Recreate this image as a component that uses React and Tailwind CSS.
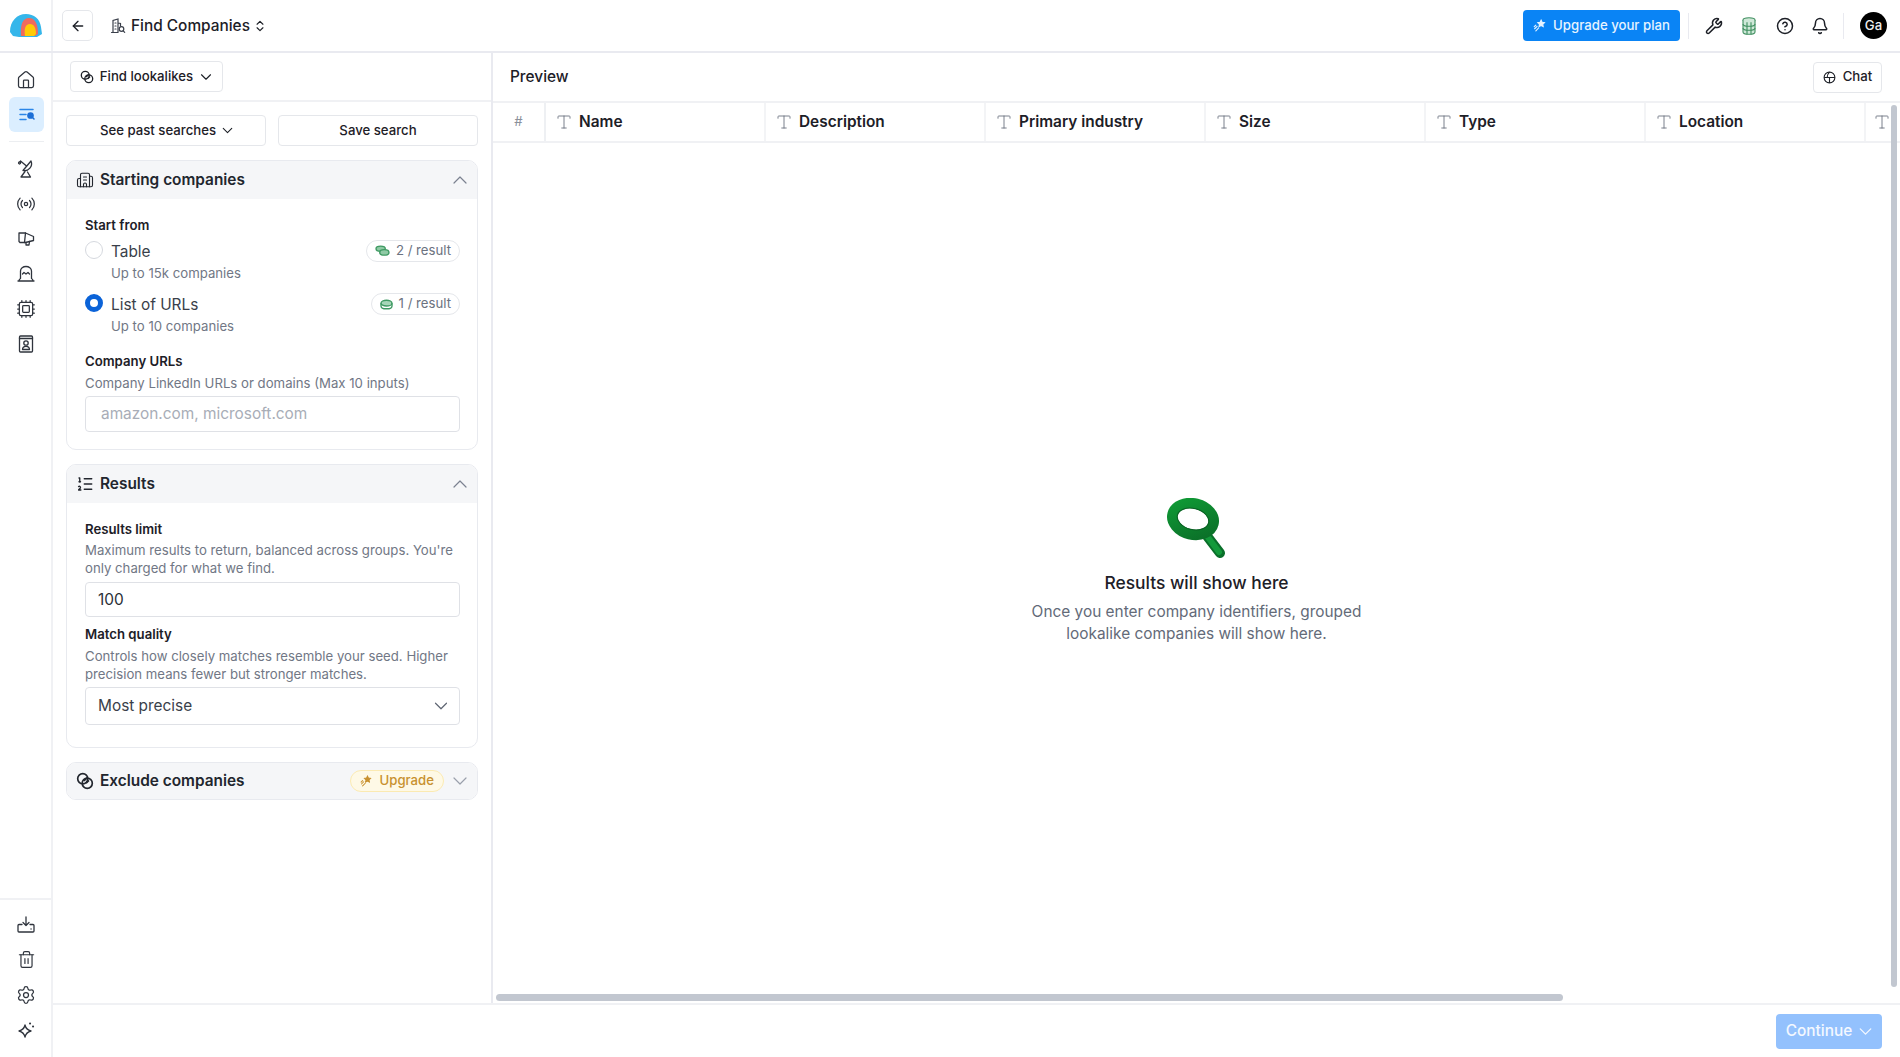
import React from "react";
import {
  ArrowLeft,
  Bell,
  Building2,
  ChevronDown,
  ChevronUp,
  ChevronsUpDown,
  CircleHelp,
  Cpu,
  House,
  ListOrdered,
  Radio,
  Settings,
  Trash2,
  Type,
  Wrench,
} from "lucide-react";

const Logo = () => (
  <svg width="32" height="24" viewBox="0 0 32 24">
    <path d="M0 18C0 7 7 0 16 0c8 0 14 5 15 13l1 7-5 3H9l-6-1z" fill="#35b6ea" />
    <path d="M11 22C10 10 13 4 19 4c6 0 9 6 9 16l-3 2z" fill="#ef6a5e" />
    <path d="M15 22c-1-7 0-12 5-12 4 0 6 4 6 10l-2 2z" fill="#ffcb05" />
  </svg>
);

const TitleIcon = () => (
  <svg width="16" height="16" viewBox="0 0 16 16" fill="none" stroke="#3a3f4a" strokeWidth="1.200" strokeLinecap="round">
    <path d="M3 14.500V2.500l5-1.500v13.500M8 5l2.500.5V8M1.500 14.500H8" />
    <path d="M5 5h1M5 8h1M5 11h1" />
    <circle cx="11.500" cy="11" r="2.300" />
    <path d="M13.200 12.800l1.500 1.500" />
  </svg>
);

const LookalikeIcon = ({ size = 14 }) => (
  <svg width={size} height={size} viewBox="0 0 16 16" fill="none" stroke="currentColor" strokeWidth="1.500">
    <circle cx="6" cy="6" r="4.500" />
    <circle cx="10" cy="10" r="4.500" />
    <path d="M7 8l3-3M9 10l2.500-2.500" />
  </svg>
);

const StarTrail = ({ size = 14 }) => (
  <svg width={size} height={size} viewBox="0 0 16 16" fill="none" stroke="currentColor" strokeWidth="1.400" strokeLinecap="round">
    <path d="M10 1.500l1.200 2.600 2.800.4-2 2 .5 2.800-2.500-1.300-2.500 1.300.5-2.800-2-2 2.800-.4z" fill="currentColor" />
    <path d="M5 9l-3 3M7 11l-3.500 3.500M3.500 7.500l-2 2" />
  </svg>
);

const CoinsStack = () => (
  <svg width="15" height="12" viewBox="0 0 16 13" fill="none" stroke="#3f9a63" strokeWidth="1.500">
    <ellipse cx="6" cy="4" rx="5" ry="2.800" fill="#8fcaa5" />
    <ellipse cx="10" cy="8" rx="5" ry="3" fill="#8fcaa5" />
  </svg>
);

const Coin = () => (
  <svg width="13" height="11" viewBox="0 0 14 12" fill="none" stroke="#3f9a63" strokeWidth="1.500">
    <ellipse cx="7" cy="4.500" rx="6" ry="3.200" fill="#a6d6b8" />
    <path d="M1 4.500v3c0 1.800 2.700 3.200 6 3.200s6-1.400 6-3.200v-3" />
  </svg>
);

const DbIcon = () => (
  <svg width="14" height="18" viewBox="0 0 14 18" fill="#cfe8d8" stroke="#3f8f5f" strokeWidth="1.100">
    <ellipse cx="7" cy="3" rx="6" ry="2.300" />
    <path d="M1 3v12c0 1.300 2.700 2.300 6 2.300s6-1 6-2.300V3" />
    <path d="M1 7c0 1.300 2.700 2.300 6 2.300s6-1 6-2.300M1 11c0 1.300 2.700 2.300 6 2.300s6-1 6-2.300M5 5.200v12M9 5.200v12" fill="none" />
  </svg>
);

const ListSearch = () => (
  <svg width="16" height="14" viewBox="0 0 16 14" fill="none" stroke="#2b86e8" strokeWidth="1.500" strokeLinecap="round">
    <path d="M1 1.500h13M1 6.500h6M1 11.500h6" />
    <circle cx="11.500" cy="7.500" r="2.600" fill="#1d6fd6" stroke="#1d6fd6" />
    <path d="M13.500 9.500l1.500 1.500" stroke="#1d6fd6" />
  </svg>
);

const ChatGlobe = () => (
  <svg width="13" height="13" viewBox="0 0 14 14" fill="none" stroke="currentColor" strokeWidth="1.200">
    <circle cx="7" cy="7" r="5.800" />
    <path d="M1.200 7h11.600M7 7v5.800M7 1.200C5 3 4.500 5 4.500 7" />
  </svg>
);

const Magnifier = () => (
  <svg width="62" height="62" viewBox="0 0 62 62" fill="none">
    <defs>
      <linearGradient id="ring" x1="0" y1="0" x2="1" y2="1">
        <stop offset="0" stopColor="#0f9a35" />
        <stop offset="1" stopColor="#0b6e28" />
      </linearGradient>
    </defs>
    <path d="M41 38l13 17" stroke="#0a6f2a" strokeWidth="10" strokeLinecap="round" />
    <path d="M41 38l12 16" stroke="#139a3b" strokeWidth="6" strokeLinecap="round" />
    <ellipse cx="27" cy="21" rx="21" ry="15.500" transform="rotate(14 27 21)" stroke="url(#ring)" strokeWidth="10.500" />
    <ellipse cx="27" cy="21" rx="16" ry="10.500" transform="rotate(14 27 21)" stroke="#0a5f23" strokeWidth="1" />
  </svg>
);

const Svg20 = ({ children }) => (
  <svg width="20" height="20" viewBox="0 0 20 20" fill="none" stroke="currentColor" strokeWidth="1.300" strokeLinecap="round" strokeLinejoin="round">
    {children}
  </svg>
);

const DishIcon = () => (
  <Svg20>
    <path d="M15 2a7 7 0 0 1-8 9.500z" />
    <path d="M4.500 2l6 5M3.500 3a1 1 0 1 0 .1 0" />
    <path d="M9 12.500L5 18h9.500l-3-5" />
  </Svg20>
);

const HornIcon = () => (
  <Svg20>
    <path d="M3 4h6.500l8 3.500v4l-8 2H4l-1-1z" />
    <path d="M9.500 4l-1 9.500M10 13.500v2.500h3l.5-3.500" />
  </Svg20>
);

const Dome = () => (
  <Svg20>
    <path d="M2 17h16M3 17c0-1 .5-2 1.500-2.500V7c0-2.500 2.500-4.500 5.500-4.500s5.500 2 5.500 4.500v7.500C16.500 15 17 16 17 17" />
    <path d="M6.500 10l1.500-1.500 2 1.500 2-1.500 1.500 1.500" />
  </Svg20>
);

const ContactIcon = () => (
  <Svg20>
    <rect x="3.500" y="2" width="13" height="16" rx="1" />
    <path d="M3.500 4.500h13" />
    <circle cx="10" cy="9" r="2.200" />
    <path d="M6.500 15.500c0-2 1.500-3.200 3.500-3.200s3.500 1.200 3.500 3.200z" />
  </Svg20>
);

const TrayIcon = () => (
  <Svg20>
    <path d="M10 2v8.500M7 7.500l3 3 3-3" />
    <path d="M6 9.500H3a1 1 0 0 0-1 1V16a1 1 0 0 0 1 1h14a1 1 0 0 0 1-1v-5.500a1 1 0 0 0-1-1h-3" />
    <path d="M15 14h.1" />
  </Svg20>
);

const SparkIcon = () => (
  <Svg20>
    <path d="M9 5c.8 3.500 2.200 5 6 6-3.800 1-5.200 2.500-6 6-.8-3.500-2.200-5-6-6 3.800-1 5.200-2.500 6-6z" />
    <path d="M14 3.500h.1M17 6.500h.1" strokeWidth="2" />
  </Svg20>
);

const LucideRail = ({ icon: Icon, size = 20 }) => <Icon size={size} strokeWidth={1.500} />;

const railTop = [
  <DishIcon />,
  <LucideRail icon={Radio} />,
  <HornIcon />,
  <Dome />,
  <LucideRail icon={Cpu} />,
  <ContactIcon />,
];
const railBottom = [
  <TrayIcon />,
  <LucideRail icon={Trash2} size={19} />,
  <LucideRail icon={Settings} />,
  <SparkIcon />,
];
const columns = ["Name", "Description", "Primary industry", "Size", "Type", "Location"];

const RailCell = ({ children }) => (
  <div className="flex h-[35px] items-center justify-center pl-[1px] text-[#2f343d]">{children}</div>
);

const Section = ({ icon, title, open = true, right, children }) => (
  <div className="overflow-hidden rounded-[10px] border border-[#e8eaef] bg-white">
    <div className={open ? "flex h-[38px] items-center bg-[#f5f6f8] pl-[9px] pr-[5px]" : "flex h-[36px] items-center bg-[#f5f6f8] pl-[9px] pr-[5px]"}>
      <span className="flex w-[18px] justify-center text-[#22262e]">{icon}</span>
      <span className="ml-[6px] text-[15.400px] font-semibold text-[#22262e]">{title}</span>
      <span className="ml-auto flex items-center gap-[4px]">
        {right}
        {open ? (
          <ChevronUp size={24} strokeWidth={1.200} className="text-[#7b8290]" />
        ) : (
          <ChevronDown size={24} strokeWidth={1.200} className="text-[#9aa0ab]" />
        )}
      </span>
    </div>
    {children}
  </div>
);

const Label = ({ children }) => (
  <div className="text-[13.200px] leading-[18px] font-semibold text-[#1d2027]">{children}</div>
);

const Hint = ({ children }) => (
  <div className="text-[13.200px] leading-[18px] text-[#717785]">{children}</div>
);

const RadioRow = ({ checked, title, hint, badge }) => (
  <div className="flex items-start">
    <span
      className={
        checked
          ? "-mt-[1px] h-[18px] w-[18px] shrink-0 rounded-full border-[5px] border-[#0b63d8] bg-white"
          : "-mt-[1px] h-[18px] w-[18px] shrink-0 rounded-full border border-[#d5d8de] bg-white"
      }
    />
    <div className="ml-[8px]">
      <div className="text-[15.400px] leading-[20px] text-[#3a3f4a]">{title}</div>
      <div className="mt-[2px] text-[13.200px] leading-[18px] text-[#717785]">{hint}</div>
    </div>
    {badge}
  </div>
);

const Badge = ({ icon, text }) => (
  <span className="ml-auto -mt-[2px] flex h-[22px] items-center gap-[6px] rounded-full border border-[#e5e7eb] px-[8px] text-[13.200px] text-[#6b7280]">
    {icon}
    {text}
  </span>
);

export default function App() {
  return (
    <div className="flex h-screen w-screen flex-col overflow-hidden bg-white font-['Inter',sans-serif] text-[#1d2027]">
      <header className="flex h-[53px] shrink-0 items-center border-b-2 border-[#e9eaf0] pr-[13px]">
        <div className="flex h-full w-[53px] shrink-0 items-center justify-center border-r-2 border-[#f0f1f4]">
          <Logo />
        </div>
        <button className="ml-[9px] flex h-[31px] w-[31px] items-center justify-center rounded-[5px] border border-[#e5e7eb]">
          <ArrowLeft size={16} strokeWidth={2} />
        </button>
        <span className="ml-[17px]">
          <TitleIcon />
        </span>
        <span className="ml-[5px] text-[15.400px] font-medium">Find Companies</span>
        <ChevronsUpDown size={14} strokeWidth={2} className="ml-[3px]" />
        <div className="ml-auto flex items-center">
          <button className="flex h-[31px] w-[157px] items-center justify-center gap-[7px] rounded-[4px] bg-[#0a84f5] text-[13.200px] font-medium text-[#e6f3ff]">
            <StarTrail size={13} />
            Upgrade your plan
          </button>
          <div className="ml-[8px] h-[26px] w-px bg-[#e9eaf0]" />
          <div className="ml-[16px] flex w-[18px] justify-center">
            <Wrench size={18} strokeWidth={2} />
          </div>
          <div className="ml-[17px] flex w-[18px] justify-center">
            <DbIcon />
          </div>
          <div className="ml-[18px] flex w-[18px] justify-center">
            <CircleHelp size={18} strokeWidth={2} />
          </div>
          <div className="ml-[17px] flex w-[18px] justify-center">
            <Bell size={18} strokeWidth={2} />
          </div>
          <div className="ml-[14px] h-[26px] w-px bg-[#e9eaf0]" />
          <div className="ml-[16px] flex h-[27px] w-[27px] items-center justify-center rounded-full bg-black text-[13.200px] font-medium text-[#eeeeee]">
            Ga
          </div>
        </div>
      </header>

      <div className="flex min-h-0 flex-1">
        <aside className="flex w-[53px] shrink-0 flex-col border-r-2 border-[#f0f1f4]">
          <div className="flex-1 pt-[9px]">
            <RailCell>
              <LucideRail icon={House} />
            </RailCell>
            <div className="ml-[9px] mr-[7px] flex h-[35px] items-center justify-center rounded-[6px] bg-[#dbeeff]">
              <ListSearch />
            </div>
            <div className="ml-[9px] mr-[7px] my-[9px] h-px bg-[#eceef1]" />
            {railTop.map((icon, i) => (
              <RailCell key={i}>{icon}</RailCell>
            ))}
          </div>
          <div className="h-[159px] border-t-2 border-[#f0f1f4] pt-[7px]">
            {railBottom.map((icon, i) => (
              <RailCell key={i}>{icon}</RailCell>
            ))}
          </div>
        </aside>

        <div className="flex min-w-0 flex-1 flex-col">
          <div className="flex min-h-0 flex-1">
            <section className="w-[440px] shrink-0 border-r-2 border-[#e9eaf0]">
              <div className="flex h-[49px] items-center border-b-2 border-[#f0f1f4] pl-[17px]">
                <button className="flex h-[31px] w-[153px] items-center justify-center gap-[6px] rounded-[4px] border border-[#e5e7eb] pl-[2px] text-[13.200px] font-medium">
                  <LookalikeIcon size={14} />
                  Find lookalikes
                  <ChevronDown size={18} strokeWidth={1.500} className="-ml-[2px]" />
                </button>
              </div>

              <div className="flex flex-col gap-[14px] px-[13px] pt-[13px]">
                <div className="grid grid-cols-2 gap-[12px]">
                  <button className="flex h-[31px] items-center justify-center gap-[3px] rounded-[4px] border border-[#e5e7eb] pl-[4px] text-[13.200px] font-medium">
                    See past searches
                    <ChevronDown size={17} strokeWidth={1.500} />
                  </button>
                  <button className="h-[31px] rounded-[4px] border border-[#e5e7eb] text-[13.200px] font-medium">
                    Save search
                  </button>
                </div>

                <Section icon={<Building2 size={18} strokeWidth={1.500} />} title="Starting companies">
                  <div className="pl-[18px] pr-[17px] pb-[17px] pt-[17px]">
                    <Label>Start from</Label>
                    <div className="mt-[8px]">
                      <RadioRow
                        title="Table"
                        hint="Up to 15k companies"
                        badge={<Badge icon={<CoinsStack />} text="2 / result" />}
                      />
                    </div>
                    <div className="mt-[13px]">
                      <RadioRow
                        checked
                        title="List of URLs"
                        hint="Up to 10 companies"
                        badge={<Badge icon={<Coin />} text="1 / result" />}
                      />
                    </div>
                    <div className="mt-[17px]">
                      <Label>Company URLs</Label>
                      <div className="mt-[4px]">
                        <Hint>Company LinkedIn URLs or domains (Max 10 inputs)</Hint>
                      </div>
                    </div>
                    <div className="mt-[4px] flex h-[36px] items-center rounded-[4px] border border-[#dfe1e6] pl-[15px] text-[15.400px] text-[#a8adb7]">
                      amazon.com, microsoft.com
                    </div>
                  </div>
                </Section>

                <Section icon={<ListOrdered size={18} strokeWidth={1.800} />} title="Results">
                  <div className="pl-[18px] pr-[17px] pb-[22px] pt-[17px]">
                    <Label>Results limit</Label>
                    <div className="mt-[3px]">
                      <Hint>
                        Maximum results to return, balanced across groups. You're only charged for what we find.
                      </Hint>
                    </div>
                    <div className="mt-[5px] flex h-[35px] items-center rounded-[4px] border border-[#dfe1e6] pl-[12px] text-[15.400px] text-[#2b2f37]">
                      100
                    </div>
                    <div className="mt-[8px]">
                      <Label>Match quality</Label>
                    </div>
                    <div className="mt-[4px]">
                      <Hint>
                        Controls how closely matches resemble your seed. Higher precision means fewer but stronger
                        matches.
                      </Hint>
                    </div>
                    <div className="mt-[4px] flex h-[38px] items-center justify-between rounded-[4px] border border-[#dfe1e6] pl-[12px] pr-[7px] text-[15.400px] text-[#3a3f4a]">
                      Most precise
                      <ChevronDown size={22} strokeWidth={1.300} className="text-[#5f6673]" />
                    </div>
                  </div>
                </Section>

                <Section
                  icon={<LookalikeIcon size={18} />}
                  title="Exclude companies"
                  open={false}
                  right={
                    <span className="flex h-[22px] items-center gap-[7px] rounded-full border border-[#fbeab2] bg-[#fef9e6] px-[9px] text-[13.200px] font-medium text-[#c8912f]">
                      <StarTrail size={12} />
                      Upgrade
                    </span>
                  }
                />
              </div>
            </section>

            <section className="relative flex min-w-0 flex-1 flex-col overflow-hidden">
              <div className="flex h-[50px] shrink-0 items-center justify-between border-b-2 border-[#f0f1f4] pl-[17px] pr-[18px]">
                <span className="text-[15.400px] font-medium">Preview</span>
                <button className="flex h-[31px] w-[69px] items-center justify-center gap-[7px] rounded-[4px] border border-[#e5e7eb] text-[13.200px] font-medium">
                  <ChatGlobe />
                  Chat
                </button>
              </div>

              <div className="flex h-[40px] shrink-0 border-b-2 border-[#f0f1f4]">
                <div className="flex w-[53px] shrink-0 items-center justify-center border-r-2 border-[#eef0f3] text-[13.200px] text-[#8b909b]">
                  #
                </div>
                {columns.map((c) => (
                  <div key={c} className="flex w-[220px] shrink-0 items-center gap-[6px] border-r-2 border-[#f3f4f6] pl-[9px]">
                    <Type size={18} strokeWidth={1.200} className="text-[#6b7280]" />
                    <span className="text-[15.400px] font-semibold text-[#1d2027]">{c}</span>
                  </div>
                ))}
                <div className="flex shrink-0 items-center pl-[7px]">
                  <Type size={18} strokeWidth={1.200} className="text-[#6b7280]" />
                </div>
              </div>

              <div className="flex flex-1 flex-col items-center pt-[355px]">
                <Magnifier />
                <div className="mt-[10px] text-[17.400px] font-medium text-[#1d2027]">Results will show here</div>
                <div className="mt-[5px] w-[360px] text-center text-[15.400px] leading-[22px] text-[#636a78]">
                  Once you enter company identifiers, grouped lookalike companies will show here.
                </div>
              </div>

              <div className="absolute right-[3px] top-[52px] h-[882px] w-[6px] rounded-full bg-[#c2c7d0]" />
              <div className="absolute bottom-[2px] left-[3px] h-[7px] w-[1067px] rounded-full bg-[#c2c7d0]" />
            </section>
          </div>

          <footer className="flex h-[54px] shrink-0 items-center justify-end border-t-2 border-[#f0f1f4] pr-[18px]">
            <button className="flex h-[35px] w-[106px] items-center justify-center gap-[3px] rounded-[4px] bg-[#93c1fd] pl-[4px] text-[15.400px] font-medium text-[#f4f8ff]">
              Continue
              <ChevronDown size={21} strokeWidth={1.500} />
            </button>
          </footer>
        </div>
      </div>
    </div>
  );
}
